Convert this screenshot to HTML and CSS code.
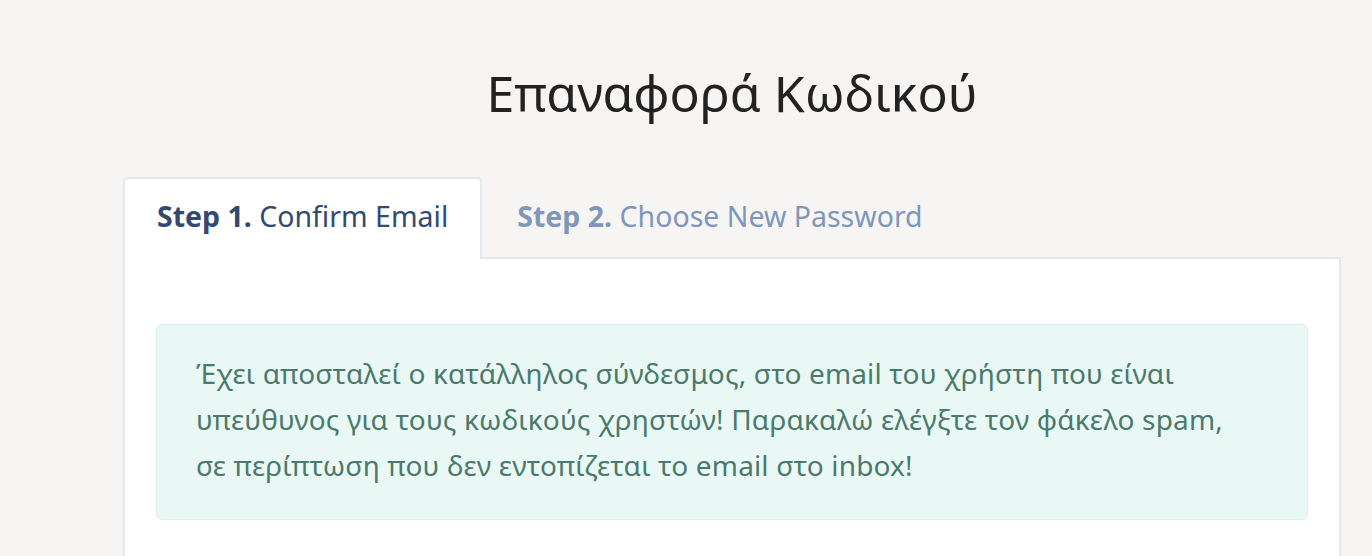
FILE: index.html
```html
<!DOCTYPE html>
<html lang="el">
<head>
<meta charset="utf-8">
<title>Επαναφορά Κωδικού</title>
<link rel="stylesheet" href="styles.css">
</head>
<body>
<main class="page">
  <h1 class="title">Επαναφορά Κωδικού</h1>
  <div class="tabs">
    <div class="tab tab-active"><b>Step 1.</b> Confirm Email</div>
    <div class="tab tab-inactive"><b>Step 2.</b> Choose New Password</div>
    <div class="tab-fill"></div>
  </div>
  <section class="card">
    <div class="alert">Έχει αποσταλεί ο κατάλληλος σύνδεσμος, στο email του χρήστη που είναι<br>υπεύθυνος για τους κωδικούς χρηστών! Παρακαλώ ελέγξτε τον φάκελο spam,<br>σε περίπτωση που δεν εντοπίζεται το email στο inbox!</div>
  </section>
</main>
</body>
</html>
```

FILE: styles.css
```css
* { box-sizing: border-box; }
html, body {
  margin: 0;
  background: #f6f5f4;
  font-family: "Noto Sans", "Open Sans", sans-serif;
}
.page {
  margin-left: 123px;
  width: 1218px;
  padding-top: 57px;
}
.title {
  margin: 0;
  text-align: center;
  font-weight: 400;
  font-size: 50px;
  line-height: 72px;
  color: #222222;
}
.tabs {
  display: flex;
  margin-top: 48px;
  height: 82px;
}
.tab {
  font-size: 28.5px;
  line-height: 40px;
  white-space: nowrap;
}
.tab b { font-weight: 700; }
.tab-active {
  padding: 17px 32px 0 32px;
  background: #ffffff;
  color: #334a70;
  border: 2px solid #e2e7f0;
  border-bottom: none;
  border-radius: 5px 5px 0 0;
}
.tab-inactive {
  padding: 19px 35px 0 35px;
  color: #7f97b8;
  border-bottom: 2px solid #e2e7f0;
}
.tab-fill {
  flex: 1;
  border-bottom: 2px solid #e2e7f0;
}
.card {
  background: #ffffff;
  border: 2px solid #e2e7f0;
  border-top: none;
  padding: 65px 31px 40px 31px;
  min-height: 300px;
}
.alert {
  background: #eaf8f5;
  border: 1px solid #dcf2ec;
  border-radius: 6px;
  padding: 25px 39px 31px 39px;
  color: #4b7a6c;
  font-size: 28px;
  line-height: 46px;
  letter-spacing: 0.15px;
}
```
